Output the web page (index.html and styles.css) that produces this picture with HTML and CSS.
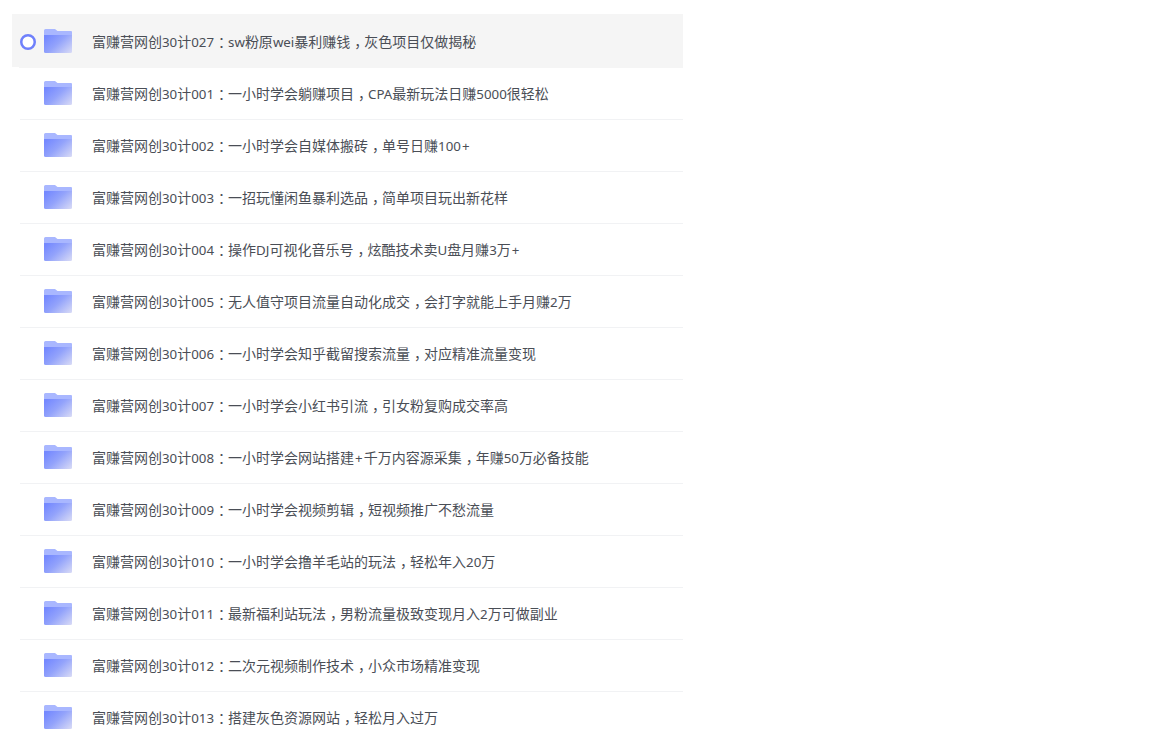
FILE: index.html
```html
<!DOCTYPE html>
<html lang="zh">
<head>
<meta charset="utf-8">
<title>文件列表</title>
<link rel="stylesheet" href="styles.css">
</head>
<body>
<svg class="defs" width="0" height="0" aria-hidden="true">
  <defs>
    <linearGradient id="folderFront" x1="0" y1="0.2" x2="1" y2="0.9">
      <stop offset="0" stop-color="#7589ff"/>
      <stop offset="0.45" stop-color="#93a3fb"/>
      <stop offset="1" stop-color="#d4d7f6"/>
    </linearGradient>
    <g id="folder">
      <path d="M0 1.500Q0 0 1.500 0H11L13.500 2H27Q28 2 28 3V8H0Z" fill="#a9b7ff"/>
      <path d="M0 6H28V22.500Q28 24 26.500 24H1.500Q0 24 0 22.500Z" fill="url(#folderFront)"/>
    </g>
  </defs>
</svg>
<div class="clip"><span class="clip-text">文件</span></div>
<ul class="list">
  <li class="row active"><svg class="radio" viewBox="0 0 16 16"><circle cx="8" cy="8" r="6.75" fill="#fff" stroke="#6f80fb" stroke-width="2.5"/></svg><svg class="icon" viewBox="0 0 28 24"><use href="#folder"/></svg><span class="name">富赚营网创<span class="n">30</span>计<span class="n">027</span><span class="p">：</span><span class="n">sw</span>粉原<span class="n">wei</span>暴利赚钱<span class="p">，</span>灰色项目仅做揭秘</span></li>
  <li class="row"><span class="spacer"></span><svg class="icon" viewBox="0 0 28 24"><use href="#folder"/></svg><span class="name">富赚营网创<span class="n">30</span>计<span class="n">001</span><span class="p">：</span>一小时学会躺赚项目<span class="p">，</span><span class="n">CPA</span>最新玩法日赚<span class="n">5000</span>很轻松</span></li>
  <li class="row"><span class="spacer"></span><svg class="icon" viewBox="0 0 28 24"><use href="#folder"/></svg><span class="name">富赚营网创<span class="n">30</span>计<span class="n">002</span><span class="p">：</span>一小时学会自媒体搬砖<span class="p">，</span>单号日赚<span class="n">100</span><span class="n plus">+</span></span></li>
  <li class="row"><span class="spacer"></span><svg class="icon" viewBox="0 0 28 24"><use href="#folder"/></svg><span class="name">富赚营网创<span class="n">30</span>计<span class="n">003</span><span class="p">：</span>一招玩懂闲鱼暴利选品<span class="p">，</span>简单项目玩出新花样</span></li>
  <li class="row"><span class="spacer"></span><svg class="icon" viewBox="0 0 28 24"><use href="#folder"/></svg><span class="name">富赚营网创<span class="n">30</span>计<span class="n">004</span><span class="p">：</span>操作<span class="n">DJ</span>可视化音乐号<span class="p">，</span>炫酷技术卖<span class="n">U</span>盘月赚<span class="n">3</span>万<span class="n plus">+</span></span></li>
  <li class="row"><span class="spacer"></span><svg class="icon" viewBox="0 0 28 24"><use href="#folder"/></svg><span class="name">富赚营网创<span class="n">30</span>计<span class="n">005</span><span class="p">：</span>无人值守项目流量自动化成交<span class="p">，</span>会打字就能上手月赚<span class="n">2</span>万</span></li>
  <li class="row"><span class="spacer"></span><svg class="icon" viewBox="0 0 28 24"><use href="#folder"/></svg><span class="name">富赚营网创<span class="n">30</span>计<span class="n">006</span><span class="p">：</span>一小时学会知乎截留搜索流量<span class="p">，</span>对应精准流量变现</span></li>
  <li class="row"><span class="spacer"></span><svg class="icon" viewBox="0 0 28 24"><use href="#folder"/></svg><span class="name">富赚营网创<span class="n">30</span>计<span class="n">007</span><span class="p">：</span>一小时学会小红书引流<span class="p">，</span>引女粉复购成交率高</span></li>
  <li class="row"><span class="spacer"></span><svg class="icon" viewBox="0 0 28 24"><use href="#folder"/></svg><span class="name">富赚营网创<span class="n">30</span>计<span class="n">008</span><span class="p">：</span>一小时学会网站搭建<span class="n plus">+</span>千万内容源采集<span class="p">，</span>年赚<span class="n">50</span>万必备技能</span></li>
  <li class="row"><span class="spacer"></span><svg class="icon" viewBox="0 0 28 24"><use href="#folder"/></svg><span class="name">富赚营网创<span class="n">30</span>计<span class="n">009</span><span class="p">：</span>一小时学会视频剪辑<span class="p">，</span>短视频推广不愁流量</span></li>
  <li class="row"><span class="spacer"></span><svg class="icon" viewBox="0 0 28 24"><use href="#folder"/></svg><span class="name">富赚营网创<span class="n">30</span>计<span class="n">010</span><span class="p">：</span>一小时学会撸羊毛站的玩法<span class="p">，</span>轻松年入<span class="n">20</span>万</span></li>
  <li class="row"><span class="spacer"></span><svg class="icon" viewBox="0 0 28 24"><use href="#folder"/></svg><span class="name">富赚营网创<span class="n">30</span>计<span class="n">011</span><span class="p">：</span>最新福利站玩法<span class="p">，</span>男粉流量极致变现月入<span class="n">2</span>万可做副业</span></li>
  <li class="row"><span class="spacer"></span><svg class="icon" viewBox="0 0 28 24"><use href="#folder"/></svg><span class="name">富赚营网创<span class="n">30</span>计<span class="n">012</span><span class="p">：</span>二次元视频制作技术<span class="p">，</span>小众市场精准变现</span></li>
  <li class="row"><span class="spacer"></span><svg class="icon" viewBox="0 0 28 24"><use href="#folder"/></svg><span class="name">富赚营网创<span class="n">30</span>计<span class="n">013</span><span class="p">：</span>搭建灰色资源网站<span class="p">，</span>轻松月入过万</span></li>
</ul>
</body>
</html>
```

FILE: styles.css
```css
html, body {
  margin: 0;
  padding: 0;
  background: #fff;
  height: 743px;
  overflow: hidden;
}
body {
  font-family: "Noto Sans CJK SC", "Noto Sans", sans-serif;
  font-size: 14px;
  color: #4a4e56;
}
.defs {
  display: block;
  height: 0;
}
.clip {
  height: 14px;
  overflow: hidden;
  padding-left: 46px;
}
.clip-text {
  display: block;
  font-size: 10px;
  line-height: 14px;
  height: 14px;
  transform: translateY(-12px);
  color: #8a93a5;
}
.list {
  list-style: none;
  margin: 0;
  padding: 0;
  width: 683px;
}
.row {
  display: flex;
  align-items: center;
  height: 51px;
  margin-left: 20px;
  border-bottom: 1px solid #f1f2f4;
  box-sizing: content-box;
}
.row.active {
  margin-left: 12px;
  padding: 2px 0 0 8px;
  background: #f5f5f5;
  background-clip: padding-box;
  border-bottom: 1px solid transparent;
  border-image: linear-gradient(to right, transparent 8px, #f5f5f5 8px) 1;
}
.radio {
  width: 16px;
  height: 16px;
  margin-right: 8px;
  flex: none;
}
.spacer {
  width: 24px;
  flex: none;
}
.icon {
  width: 28px;
  height: 24px;
  flex: none;
  margin: -1px 20px 0 0;
}
.name {
  white-space: nowrap;
  line-height: 20px;
}
.n {
  font-family: "Noto Sans", sans-serif;
  font-size: 13.3px;
}
.plus {
  padding: 0 1px;
}
.p {
  margin-left: 4px;
  letter-spacing: -4px;
}
```
